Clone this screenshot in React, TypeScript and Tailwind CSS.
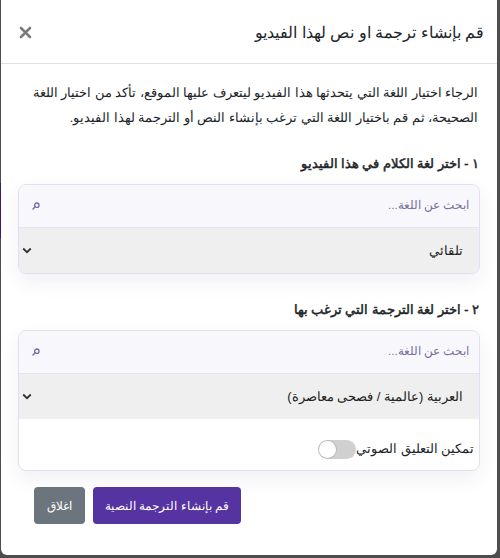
import { useState } from "react";

function SearchIcon() {
  return (
    <svg width="8" height="8" viewBox="0 0 8 8" className="shrink-0">
      <circle cx="4.8" cy="3.2" r="2.2" fill="none" stroke="#7a6aa8" strokeWidth="1.3" />
      <path d="M3.2 4.8 L1 7" stroke="#7a6aa8" strokeWidth="1.4" strokeLinecap="round" />
    </svg>
  );
}

function Chevron() {
  return (
    <svg width="10" height="7" viewBox="0 0 10 7" className="shrink-0">
      <path d="M1.2 1.5 L5 5.2 L8.8 1.5" fill="none" stroke="#333" strokeWidth="1.8" />
    </svg>
  );
}

function CloseIcon() {
  return (
    <svg width="13" height="13" viewBox="0 0 13 13">
      <path d="M2 2 L11 11 M11 2 L2 11" stroke="#7b7b7b" strokeWidth="2.6" strokeLinecap="round" />
    </svg>
  );
}

function LangPicker({ value, children }: { value: string; children?: React.ReactNode }) {
  return (
    <div className="rounded-lg border border-[#e2def3] bg-white shadow-[0_8px_20px_rgba(40,30,80,0.07)] overflow-hidden">
      <div className="h-[43px] flex items-center justify-between pr-[10px] pl-[13px] bg-[#f8f7fc] border-b border-[#e6e3f3]">
        <span className="text-[11.5px] text-[#7c6f9f]">ابحث عن اللغة...</span>
        <SearchIcon />
      </div>
      <div className="h-[45px] flex items-center justify-between pr-[16px] pl-[3px] bg-[#efefef]">
        <span className="text-[13px] text-[#222]">{value}</span>
        <Chevron />
      </div>
      {children}
    </div>
  );
}

export default function App() {
  const [voice, setVoice] = useState(false);

  return (
    <div className="w-[500px] h-[558px] bg-[#4d4d4d] flex font-[Arial,sans-serif]">
      <div className="w-[1px] h-full flex flex-col">
        <div className="h-[183px]" />
        <div className="h-[55px] bg-[#3a1a78]" />
      </div>
      <div dir="rtl" className="w-[496px] h-[555px] bg-white rounded-b-md flex flex-col text-[#212529]">
        {/* Header */}
        <div className="h-[64px] shrink-0 flex items-center justify-between pr-[13px] pl-[18px] pt-[2px] border-b border-[#dee2e6]">
          <div className="text-[16px]">قم بإنشاء ترجمة او نص لهذا الفيديو</div>
          <button className="p-0 leading-none">
            <CloseIcon />
          </button>
        </div>

        {/* Body */}
        <div className="px-[17px] pt-[17px] flex flex-col">
          <p className="text-[12.5px] leading-[25px] pr-[2px]">
            الرجاء اختيار اللغة التي يتحدثها هذا الفيديو ليتعرف عليها الموقع، تأكد من اختيار اللغة الصحيحة، ثم قم باختيار اللغة التي ترغب بإنشاء النص أو الترجمة لهذا الفيديو.
          </p>

          <div className="mt-[23px] h-[20px] flex items-center text-[12.5px] pr-[1px] [-webkit-text-stroke:0.5px_#212529]">١ - اختر لغة الكلام في هذا الفيديو</div>
          <div className="mt-[10px]">
            <LangPicker value="تلقائي" />
          </div>

          <div className="mt-[26px] h-[20px] flex items-center text-[12.5px] pr-[1px] [-webkit-text-stroke:0.5px_#212529]">٢ - اختر لغة الترجمة التي ترغب بها</div>
          <div className="mt-[10px]">
            <LangPicker value="العربية (عالمية / فصحى معاصرة)">
              <div className="h-[51px] flex items-end pb-[11px] pr-[5px]">
                <label className="flex items-center text-[12.5px] cursor-pointer">
                  <span>تمكين التعليق الصوتي</span>
                  <button
                    onClick={() => setVoice(!voice)}
                    className={`w-[38px] h-[19px] rounded-full flex items-center p-[1px] ${voice ? "bg-[#5533a1] justify-start" : "bg-[#d0d0d0] justify-end"}`}
                  >
                    <span className="w-[17px] h-[17px] rounded-full bg-white shadow-[0_0_0_1px_rgba(0,0,0,0.1)]" />
                  </button>
                </label>
              </div>
            </LangPicker>
          </div>
        </div>

        {/* Footer */}
        <div className="mt-[16px] pl-[33px] flex justify-end gap-[8px]">
          <button className="h-[37px] px-[12px] rounded bg-[#5533a1] text-white text-[12px]">قم بإنشاء الترجمة النصية</button>
          <button className="h-[37px] px-[13px] rounded bg-[#6c757d] text-white text-[12px]">اغلاق</button>
        </div>
      </div>
    </div>
  );
}
